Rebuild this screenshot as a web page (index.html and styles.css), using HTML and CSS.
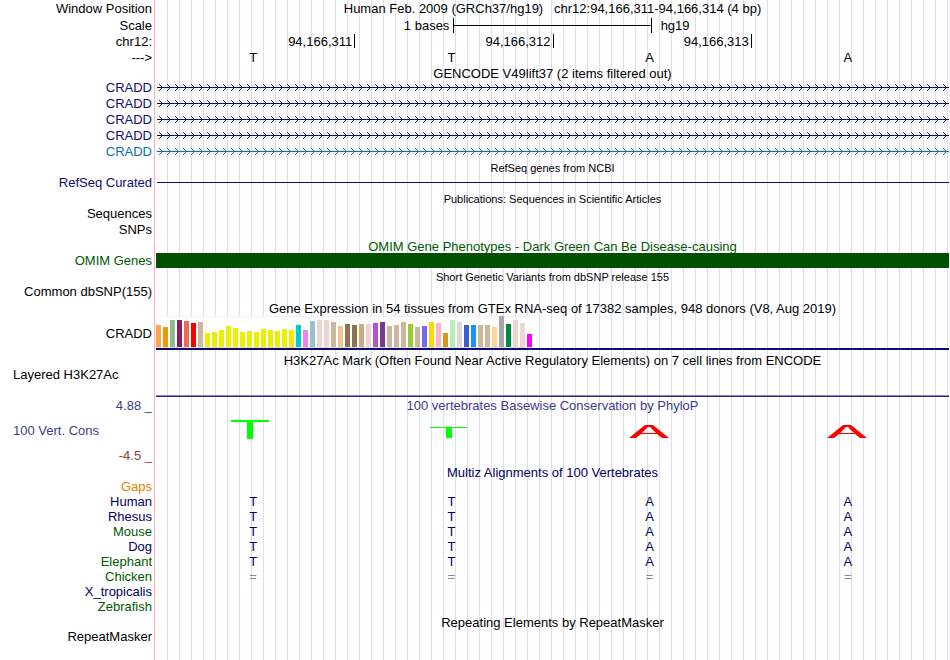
FILE: index.html
```html
<!DOCTYPE html>
<html lang="en">
  <head>
    <meta charset="utf-8">
    <meta name="viewport" content="width=device-width, initial-scale=1">
    <title>Genome Browser chr12:94,166,311-94,166,314</title>
    <link rel="stylesheet" href="styles.css">
  </head>
<body>

<!-- arrow patterns shared by the gene rows -->
<svg class="defs" width="0" height="0">
  <defs>
    <pattern id="arrowNavy" width="8" height="16" patternUnits="userSpaceOnUse">
      <path d="M3.5 4.5 L6.5 7.5 L3.5 10.5" fill="none" stroke="#0c0c78" stroke-linecap="square"/>
    </pattern>
    <pattern id="arrowBlue" width="8" height="16" patternUnits="userSpaceOnUse">
      <path d="M3.5 4.5 L6.5 7.5 L3.5 10.5" fill="none" stroke="#0a6ea8" stroke-linecap="square"/>
    </pattern>
  </defs>
</svg>

<main class="browser">

  <!-- position and ruler -->
  <div class="row tall">
    <div class="label">Window Position</div>
    <div class="track title">Human Feb. 2009 (GRCh37/hg19) &nbsp; chr12:94,166,311-94,166,314 (4 bp)</div>
  </div>
  <div class="row tall">
    <div class="label">Scale</div>
    <div class="track scale">
      <span class="scale-size">1 bases</span>
      <span class="scale-bar"></span>
      <span class="scale-db">hg19</span>
    </div>
  </div>
  <div class="row">
    <div class="label">chr12:</div>
    <div class="track cols coords"><span>94,166,311</span><span>94,166,312</span><span>94,166,313</span><span></span></div>
  </div>
  <div class="row short">
    <div class="label">---&gt;</div>
    <div class="track cols bases"><span>T</span><span>T</span><span>A</span><span>A</span></div>
  </div>

  <!-- genes -->
  <div class="row short">
    <div class="label"></div>
    <div class="track title">GENCODE V49lift37 (2 items filtered out)</div>
  </div>
  <div class="row">
    <div class="label navy">CRADD</div>
    <div class="track"><svg class="gene" width="100%" height="16"><rect x="1" y="7" width="100%" height="1" fill="#0c0c78"/><rect x="1" width="100%" height="16" fill="url(#arrowNavy)"/></svg></div>
  </div>
  <div class="row">
    <div class="label navy">CRADD</div>
    <div class="track"><svg class="gene" width="100%" height="16"><rect x="1" y="7" width="100%" height="1" fill="#0c0c78"/><rect x="1" width="100%" height="16" fill="url(#arrowNavy)"/></svg></div>
  </div>
  <div class="row">
    <div class="label navy">CRADD</div>
    <div class="track"><svg class="gene" width="100%" height="16"><rect x="1" y="7" width="100%" height="1" fill="#0c0c78"/><rect x="1" width="100%" height="16" fill="url(#arrowNavy)"/></svg></div>
  </div>
  <div class="row">
    <div class="label navy">CRADD</div>
    <div class="track"><svg class="gene" width="100%" height="16"><rect x="1" y="7" width="100%" height="1" fill="#0c0c78"/><rect x="1" width="100%" height="16" fill="url(#arrowNavy)"/></svg></div>
  </div>
  <div class="row">
    <div class="label blue">CRADD</div>
    <div class="track"><svg class="gene" width="100%" height="16"><rect x="1" y="7" width="100%" height="1" fill="#0a6ea8"/><rect x="1" width="100%" height="16" fill="url(#arrowBlue)"/></svg></div>
  </div>
  <div class="row short">
    <div class="label"></div>
    <div class="track title small">RefSeq genes from NCBI</div>
  </div>
  <div class="row">
    <div class="label navy">RefSeq Curated</div>
    <div class="track"><svg class="gene" width="100%" height="16"><rect x="1" y="7" width="100%" height="1" fill="#0c0c78"/></svg></div>
  </div>

  <!-- literature and phenotypes -->
  <div class="row short">
    <div class="label"></div>
    <div class="track title small">Publications: Sequences in Scientific Articles</div>
  </div>
  <div class="row">
    <div class="label">Sequences</div>
    <div class="track"></div>
  </div>
  <div class="row">
    <div class="label">SNPs</div>
    <div class="track"></div>
  </div>
  <div class="row short">
    <div class="label"></div>
    <div class="track title green">OMIM Gene Phenotypes - Dark Green Can Be Disease-causing</div>
  </div>
  <div class="row">
    <div class="label green">OMIM Genes</div>
    <div class="track"><div class="omim"></div></div>
  </div>
  <div class="row short">
    <div class="label"></div>
    <div class="track title small">Short Genetic Variants from dbSNP release 155</div>
  </div>
  <div class="row">
    <div class="label">Common dbSNP(155)</div>
    <div class="track"></div>
  </div>

  <!-- expression -->
  <div class="row short">
    <div class="label"></div>
    <div class="track title">Gene Expression in 54 tissues from GTEx RNA-seq of 17382 samples, 948 donors (V8, Aug 2019)</div>
  </div>
  <div class="row gtex">
    <div class="label">CRADD</div>
    <div class="track"><div class="gtex-line"><div id="gtex_bars" class="bars"></div></div></div>
  </div>

  <!-- regulation -->
  <div class="row short">
    <div class="label"></div>
    <div class="track title">H3K27Ac Mark (Often Found Near Active Regulatory Elements) on 7 cell lines from ENCODE</div>
  </div>
  <div class="row h3k">
    <div class="label left">Layered H3K27Ac</div>
    <div class="track"><div class="signal"></div></div>
  </div>

  <!-- conservation -->
  <div class="row tall">
    <div class="label violet">4.88 _</div>
    <div class="track title violet">100 vertebrates Basewise Conservation by PhyloP</div>
  </div>
  <div class="row cons">
    <div class="label left violet">100 Vert. Cons</div>
    <div class="track cols logos">
      <svg width="44" height="33" viewBox="0 0 44 33"><path d="M1 6h38v2H23v17h-6V8H1z" fill="#0f0"/></svg>
      <svg width="44" height="33" viewBox="0 0 44 33"><path d="M2 13h37v1H24v10h-6V14H2z" fill="#0f0"/></svg>
      <svg width="44" height="33" viewBox="0 0 44 33"><path fill-rule="evenodd" d="M2 24L18 11h8L42 24h-7L30 20H14L9 24zM15 19h14L23 13h-2z" fill="#f00"/></svg>
      <svg width="44" height="33" viewBox="0 0 44 33"><path fill-rule="evenodd" d="M2 24L18 11h8L42 24h-7L30 20H14L9 24zM15 19h14L23 13h-2z" fill="#f00"/></svg>
    </div>
  </div>
  <div class="row tall">
    <div class="label maroon">-4.5 _</div>
    <div class="track"></div>
  </div>

  <!-- alignments -->
  <div class="row short">
    <div class="label"></div>
    <div class="track title ink">Multiz Alignments of 100 Vertebrates</div>
  </div>
  <div class="row short">
    <div class="label orange">Gaps</div>
    <div class="track"></div>
  </div>
  <div class="row short">
    <div class="label ink">Human</div>
    <div class="track cols bases ink"><span>T</span><span>T</span><span>A</span><span>A</span></div>
  </div>
  <div class="row short">
    <div class="label ink">Rhesus</div>
    <div class="track cols bases ink"><span>T</span><span>T</span><span>A</span><span>A</span></div>
  </div>
  <div class="row short">
    <div class="label green">Mouse</div>
    <div class="track cols bases ink"><span>T</span><span>T</span><span>A</span><span>A</span></div>
  </div>
  <div class="row short">
    <div class="label ink">Dog</div>
    <div class="track cols bases ink"><span>T</span><span>T</span><span>A</span><span>A</span></div>
  </div>
  <div class="row short">
    <div class="label green">Elephant</div>
    <div class="track cols bases ink"><span>T</span><span>T</span><span>A</span><span>A</span></div>
  </div>
  <div class="row short">
    <div class="label green">Chicken</div>
    <div class="track cols bases faded"><span>=</span><span>=</span><span>=</span><span>=</span></div>
  </div>
  <div class="row short">
    <div class="label ink">X_tropicalis</div>
    <div class="track"></div>
  </div>
  <div class="row short">
    <div class="label green">Zebrafish</div>
    <div class="track"></div>
  </div>

  <!-- repeats -->
  <div class="row short">
    <div class="label"></div>
    <div class="track title">Repeating Elements by RepeatMasker</div>
  </div>
  <div class="row">
    <div class="label">RepeatMasker</div>
    <div class="track"></div>
  </div>
  <div class="row rest">
    <div class="label"></div>
    <div class="track"></div>
  </div>

</main>

<script src="gtex.js"></script>
</body>
</html>
```
FILE: styles.css
```css
* {box-sizing: border-box;}

body {margin: 0;background: white;color: black;font-family: "Liberation Sans", Arial, sans-serif;font-size: 13px;}
.defs {position: absolute;}
.browser {display: flex;flex-direction: column;min-height: 100vh;padding-right: 1px;}

/* one row = label on the left, track on the right */
.row {display: flex;height: 16px;line-height: 16px;white-space: nowrap;}
.short {height: 15px;line-height: 15px;}
.tall {height: 17px;line-height: 17px;}
.rest {flex: 1;height: auto;}
.label {flex: none;width: 154px;padding-right: 2px;text-align: right;}
.left {padding-left: 13px;text-align: left;}
.track {flex: 1;min-width: 0;border-left: 1px solid #ffb4b4;padding-left: 1px;
  background: repeating-linear-gradient(to right, transparent 0 11px, #dcdcf8 11px 12px) content-box;}
.title {text-align: center;}
.short .title {line-height: 17px;}
.small {font-size: 11px;}

/* four bases across the window */
.cols {display: grid;grid-template-columns: repeat(4, 1fr);}
.coords span {height: 14px;padding-right: 2px;text-align: right;}
.coords span + span {border-left: 1px solid black;}
.bases span {padding-right: 4px;text-align: center;}
.logos {justify-items: center;}
.logos svg {display: block;margin-right: 6px;}

.scale {display: grid;grid-template-columns: 3fr 2fr 3fr;align-items: center;}
.scale-size {padding-right: 4px;text-align: right;}
.scale-bar {height: 15px;border: solid black;border-width: 0 1px;background: linear-gradient(black, black) center / 100% 1px no-repeat;}
.scale-db {padding-left: 9px;}

.gene {display: block;}
.omim {height: 15px;background: #005000;}

.gtex {height: 37px;line-height: 38px;}
.gtex-line {height: 35px;padding-top: 1px;border-bottom: 2px solid #0c0c78;}
.bars {display: inline-flex;vertical-align: top;align-items: flex-end;gap: 2px;height: 32px;background: white;border-top: 1px solid #f2f2f2;border-bottom: 1px solid #dcdcdc;padding-right: 1px;}
.bars span {width: 5px;}

.h3k {height: 30px;}
.signal {height: 30px;border-bottom: 1px solid #322850;box-shadow: inset 0 -1px #8080e8;}
.cons {height: 33px;line-height: 33px;}

.navy {color: #0c0c78;}
.blue {color: #0a6eb4;}
.ink {color: #000064;}
.green {color: #005a00;}
.violet {color: #3c3c8c;}
.maroon {color: #8c3c3c;}
.orange {color: #e68200;}
.faded {color: #8080b4;}
```
FILE: gtex.js
```javascript
// [bar height, tissue colour]
const tissues = [
  [22, '#ffa54f'], [20, '#ee9a00'], [27, '#8fbc8f'], [27, '#8b1c62'], [26, '#ee6a50'], [24, '#ff0000'],
  [25, '#cdb79e'], [14, '#eeee00'], [15, '#eeee00'], [17, '#eeee00'], [21, '#eeee00'], [19, '#eeee00'],
  [15, '#eeee00'], [16, '#eeee00'], [15, '#eeee00'], [18, '#eeee00'], [17, '#eeee00'], [16, '#eeee00'],
  [18, '#eeee00'], [17, '#eeee00'], [22, '#00cdcd'], [17, '#ee82ee'], [26, '#9ac0cd'], [27, '#eed5d2'],
  [27, '#eed5d2'], [25, '#cdb79e'], [21, '#eec591'], [23, '#8b7355'], [22, '#8b7355'], [23, '#cdaa7d'],
  [23, '#eed5d2'], [24, '#b452cd'], [25, '#7a378b'], [21, '#cdb79e'], [22, '#cdb79e'], [25, '#cdb79e'],
  [23, '#9acd32'], [20, '#cdb79e'], [21, '#7a67ee'], [25, '#ffd700'], [24, '#ffb6c1'], [14, '#cd9b1d'],
  [27, '#b4eeb4'], [25, '#d9d9d9'], [22, '#3a5fcd'], [22, '#1e90ff'], [22, '#cdb79e'], [22, '#cdb79e'],
  [20, '#ffd39b'], [31, '#a6a6a6'], [23, '#008b45'], [27, '#eed5d2'], [24, '#eed5d2'], [13, '#ff00ff']
];

const bars = document.getElementById('gtex_bars');
for (const [height, color] of tissues) {
  bars.insertAdjacentHTML('beforeend', `<span style="height:${height}px;background:${color}"></span>`);
}
```
